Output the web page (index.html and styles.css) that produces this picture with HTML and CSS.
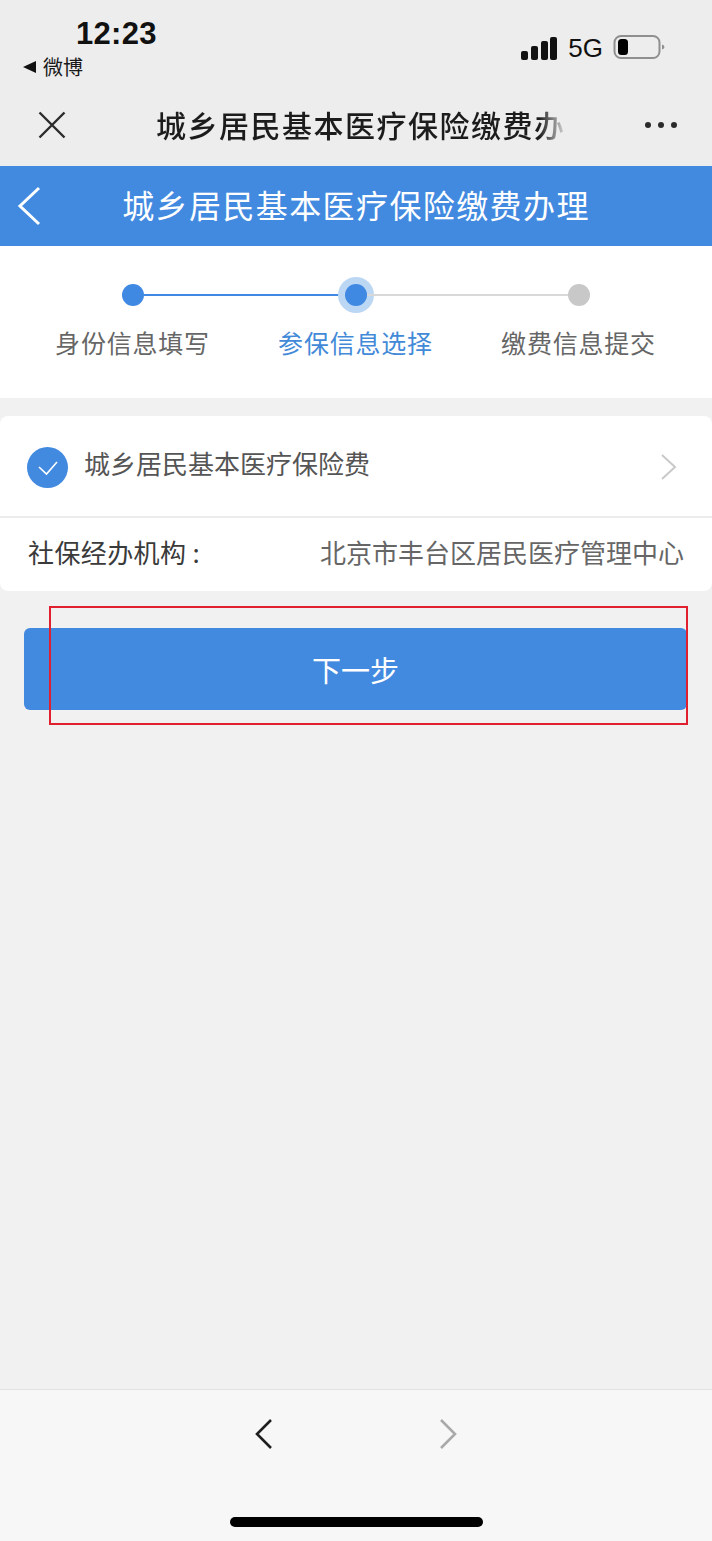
FILE: index.html
```html
<!DOCTYPE html>
<html lang="zh-CN">
<head>
<meta charset="utf-8">
<title>城乡居民基本医疗保险缴费办理</title>
<link rel="stylesheet" href="styles.css">
</head>
<body>
<div class="page">
  <header class="top">
    <div class="status">
      <div class="status-left">
        <div class="time">12:23</div>
        <div class="backapp"><span class="tri"></span><span>微博</span></div>
      </div>
      <div class="status-right">
        <svg class="signal" width="36" height="24" viewBox="0 0 36 24"><rect x="0" y="14" width="7" height="9" rx="2"/><rect x="10" y="9" width="7" height="14" rx="2"/><rect x="20" y="4" width="7" height="19" rx="2"/><rect x="29" y="0" width="7" height="23" rx="2"/></svg>
        <span class="net">5G</span>
        <svg class="battery" width="52" height="26" viewBox="0 0 52 26"><rect x="1.5" y="2" width="45" height="22" rx="6.5" fill="none" stroke="#8f8f8f" stroke-width="2"/><rect x="5" y="5" width="10" height="16" rx="3.5" fill="#000"/><path d="M49 10.5c1.6.4 2.4 1.300 2.400 2.500s-.8 2.100-2.400 2.500z" fill="#8f8f8f"/></svg>
      </div>
    </div>
    <div class="nav">
      <svg class="close" width="30" height="30" viewBox="0 0 30 30"><path d="M2.500 2.500l25 25M27.500 2.500l-25 25" fill="none" stroke="#2b2b2b" stroke-width="2.400"/></svg>
      <div class="nav-title">城乡居民基本医疗保险缴费办</div>
      <div class="more"><i></i><i></i><i></i></div>
    </div>
  </header>

  <div class="bluebar">
    <svg class="back" width="26" height="40" viewBox="0 0 26 40"><path d="M23 2L4 20l19 18" fill="none" stroke="#fff" stroke-width="3"/></svg>
    <h1>城乡居民基本医疗保险缴费办理</h1>
  </div>

  <section class="steps">
    <div class="track">
      <span class="dot"></span>
      <span class="line done"></span>
      <span class="dot current"></span>
      <span class="line"></span>
      <span class="dot off"></span>
    </div>
    <div class="labels">
      <span>身份信息填写</span>
      <span class="active">参保信息选择</span>
      <span>缴费信息提交</span>
    </div>
  </section>

  <section class="card">
    <div class="row select">
      <span class="check"><svg width="24" height="18" viewBox="0 0 24 18"><path d="M3 8l7.500 7L21 3" fill="none" stroke="#fff" stroke-width="1.600"/></svg></span>
      <span class="item-name">城乡居民基本医疗保险费</span>
      <svg class="chev" width="18" height="28" viewBox="0 0 18 28"><path d="M2 2l13 12L2 26" fill="none" stroke="#c9c9c9" stroke-width="2"/></svg>
    </div>
    <div class="row org">
      <span class="org-label">社保经办机构 :</span>
      <span class="org-value">北京市丰台区居民医疗管理中心</span>
    </div>
  </section>

  <div class="btn-wrap">
    <button class="next">下一步</button>
    <div class="redbox"></div>
  </div>

  <main class="fill"></main>

  <footer class="bottom">
    <div class="arrows">
      <svg width="20" height="32" viewBox="0 0 20 32"><path d="M17 2L3 16l14 14" fill="none" stroke="#1f1f1f" stroke-width="2.600"/></svg>
      <svg width="20" height="32" viewBox="0 0 20 32"><path d="M3 2l14 14L3 30" fill="none" stroke="#a9a9a9" stroke-width="2.600"/></svg>
    </div>
    <div class="home"></div>
  </footer>
</div>
</body>
</html>
```

FILE: styles.css
```css
* { box-sizing: border-box; }
html, body { margin: 0; padding: 0; }
body {
  font-family: "Noto Sans CJK SC", "Liberation Sans", sans-serif;
  background: #f1f1f1;
}
.page {
  width: 712px;
  height: 1541px;
  display: flex;
  flex-direction: column;
  overflow: hidden;
}

/* top chrome */
.top { background: #ededed; height: 166px; flex: none; }
.status {
  height: 96px;
  display: flex;
  justify-content: space-between;
  padding: 16px 47px 0 23px;
}
.status-left { display: flex; flex-direction: column; }
.time {
  font-family: "Liberation Sans", sans-serif;
  font-weight: 700;
  font-size: 31px;
  line-height: 36px;
  color: #111;
  margin-left: 53px;
  letter-spacing: 0.3px;
}
.backapp {
  display: flex;
  align-items: center;
  gap: 7px;
  font-size: 20px;
  line-height: 26px;
  color: #1a1a1a;
  margin-top: 2px;
}
.tri {
  width: 0;
  height: 0;
  border-style: solid;
  border-width: 6.500px 13px 6.500px 0;
  border-color: transparent #111 transparent transparent;
}
.status-right {
  display: flex;
  align-items: center;
  height: 38px;
  margin-top: 12px;
}
.signal { fill: #111; margin: 3px 11px 0 0; }
.net {
  font-family: "Liberation Sans", sans-serif;
  font-size: 26px;
  color: #111;
  margin: 2px 10px 0 0;
}
.nav {
  height: 70px;
  display: flex;
  align-items: center;
  padding: 0 35px 12px 37px;
}
.close { flex: none; margin-right: 89px; }
.nav-title {
  width: 412px;
  font-size: 30px;
  font-weight: 500;
  letter-spacing: 1.500px;
  line-height: 40px;
  margin-top: -3px;
  color: #1c1c1c;
  white-space: nowrap;
  -webkit-mask-image: linear-gradient(to right, #000 93%, transparent 100%);
  mask-image: linear-gradient(to right, #000 93%, transparent 100%);
}
.more { display: flex; gap: 7px; margin-left: auto; }
.more i { width: 6px; height: 6px; border-radius: 50%; background: #2b2b2b; display: block; }

/* blue header */
.bluebar {
  position: relative;
  height: 80px;
  flex: none;
  background: #428ae0;
  display: flex;
  align-items: center;
  justify-content: center;
}
.back { position: absolute; left: 16px; top: 20px; }
.bluebar h1 {
  margin: -4px 0 0 0;
  font-size: 32px;
  font-weight: 400;
  letter-spacing: 1.400px;
  color: #fff;
  line-height: 40px;
}

/* steps */
.steps {
  height: 152px;
  flex: none;
  background: #fff;
  padding-top: 31px;
}
.track {
  height: 36px;
  display: flex;
  align-items: center;
  padding-left: 122px;
}
.dot {
  width: 22px;
  height: 22px;
  border-radius: 50%;
  background: #3f89e3;
  flex: none;
}
.dot.current { box-shadow: 0 0 0 7px #bcd7f4; }
.dot.off { background: #c8c8c8; }
.line { width: 201px; height: 2px; background: #d8d8d8; }
.line.done { background: #3f89e3; }
.labels {
  display: grid;
  grid-template-columns: repeat(3, 223px);
  margin: 11px 0 0 21px;
  font-size: 25px;
  letter-spacing: 0.800px;
  line-height: 36px;
  color: #666;
  text-align: center;
}
.labels .active { color: #428ad8; }

/* card */
.card {
  margin-top: 18px;
  background: #fff;
  border-radius: 8px;
  flex: none;
}
.row { display: flex; align-items: center; }
.select {
  height: 102px;
  padding: 0 34px 0 27px;
  border-bottom: 2px solid #ececec;
}
.check {
  width: 41px;
  height: 41px;
  border-radius: 50%;
  background: #428ae0;
  display: flex;
  align-items: center;
  justify-content: center;
  flex: none;
  margin-top: 3px;
}
.item-name {
  margin-left: 16px;
  font-size: 26px;
  line-height: 36px;
  color: #555;
  margin-bottom: 7px;
}
.chev { margin-left: auto; margin-top: 1px; }
.org {
  height: 73px;
  padding: 0 28px 5px;
  justify-content: space-between;
  font-size: 26px;
  line-height: 36px;
}
.org-label { color: #3a3a3a; letter-spacing: 0.4px; }
.org-value { color: #666; }

/* button */
.btn-wrap {
  position: relative;
  padding: 37px 25px 0 24px;
  flex: none;
}
.next {
  display: block;
  width: 100%;
  height: 82px;
  border: 0;
  border-radius: 6px;
  background: #428ae0;
  color: #fff;
  font-family: inherit;
  font-size: 29px;
}
.redbox {
  position: absolute;
  left: 49px;
  top: 15px;
  width: 639px;
  height: 119px;
  border: 2px solid #e0202f;
}
.fill { flex: 1; }

/* bottom */
.bottom {
  height: 152px;
  flex: none;
  background: #f7f7f7;
  border-top: 1px solid #e2e2e2;
  position: relative;
}
.arrows {
  display: flex;
  justify-content: center;
  gap: 164px;
  padding: 28px 0 0 0;
}
.home {
  position: absolute;
  left: 230px;
  top: 127px;
  width: 253px;
  height: 10px;
  border-radius: 5px;
  background: #000;
}
```
